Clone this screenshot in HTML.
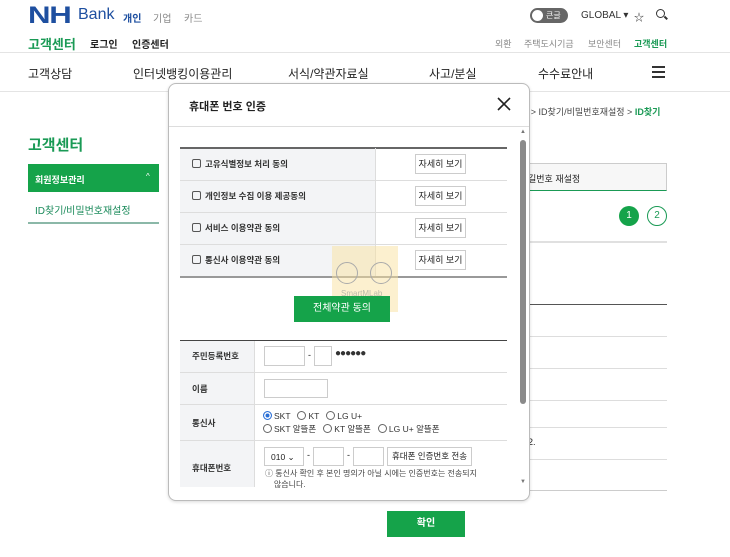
<!DOCTYPE html>
<html><head><meta charset="utf-8"><style>
*{margin:0;padding:0;box-sizing:border-box}
body{width:730px;height:557px;overflow:hidden;background:#fff;font-family:"Liberation Sans","Noto Sans CJK KR",sans-serif;color:#222;position:relative}
.a{position:absolute;white-space:nowrap}
.ln{position:absolute;height:1px}
.btn{position:absolute;border:1px solid #ccc;background:#fff;font-size:9px;text-align:center;line-height:18px;width:51px;height:20px;left:415px}
.cb{display:inline-block;width:9px;height:9px;border:1px solid #555;border-radius:2px;vertical-align:-1px;margin-right:4px}
.inp{position:absolute;border:1px solid #ccc;background:#fff}
.rd{display:inline-block;width:9px;height:9px;border:1px solid #666;border-radius:50%;vertical-align:-1px;margin-right:2px}
</style></head><body>
<!-- header -->
<div class="a" style="left:28px;top:2px;font-size:24px;font-weight:900;color:#1e4fa0;letter-spacing:-1px;transform:scaleX(1.3);transform-origin:left">NH</div>
<div class="a" style="left:78px;top:6px;font-size:16px;color:#1e4fa0">Bank</div>
<div class="a" style="left:123px;top:10px;font-size:10px;font-weight:bold;color:#1e4fa0">개인</div>
<div class="a" style="left:153px;top:10px;font-size:10px;color:#888">기업</div>
<div class="a" style="left:184px;top:10px;font-size:10px;color:#888">카드</div>
<div class="a" style="left:28px;top:34px;font-size:13px;font-weight:bold;color:#1a9a55">고객센터</div>
<div class="a" style="left:90px;top:36px;font-size:10px;font-weight:bold">로그인</div>
<div class="a" style="left:132px;top:36px;font-size:10px;font-weight:bold">인증센터</div>
<div class="a" style="left:530px;top:8px;width:38px;height:15px;border-radius:8px;background:#666"></div>
<div class="a" style="left:532px;top:10px;width:11px;height:11px;border-radius:50%;background:#fff"></div>
<div class="a" style="left:546px;top:10px;font-size:8px;color:#fff">큰글</div>
<div class="a" style="left:581px;top:10px;font-size:10px;color:#333">GLOBAL ▾</div>
<div class="a" style="left:634px;top:9px;font-size:10px;color:#333">☆</div>
<div class="a" style="left:656px;top:9px;width:9px;height:9px;border:1.5px solid #333;border-radius:50%"></div>
<div class="a" style="left:664px;top:17px;width:4px;height:1.5px;background:#333;transform:rotate(45deg)"></div>
<div class="a" style="left:495px;top:37px;font-size:9px;color:#888">외환</div>
<div class="a" style="left:524px;top:37px;font-size:9px;color:#888">주택도시기금</div>
<div class="a" style="left:588px;top:37px;font-size:9px;color:#888">보안센터</div>
<div class="a" style="left:634px;top:37px;font-size:9px;font-weight:bold;color:#1a9a55">고객센터</div>
<div class="ln" style="left:0;top:52px;width:730px;background:#e4e4e4"></div>
<div class="a" style="left:28px;top:65px;font-size:12px">고객상담</div>
<div class="a" style="left:133px;top:65px;font-size:12px">인터넷뱅킹이용관리</div>
<div class="a" style="left:288px;top:65px;font-size:12px">서식/약관자료실</div>
<div class="a" style="left:429px;top:65px;font-size:12px">사고/분실</div>
<div class="a" style="left:538px;top:65px;font-size:12px">수수료안내</div>
<div class="a" style="left:652px;top:66px;width:13px;height:1.5px;background:#333;box-shadow:0 5px 0 #333,0 10px 0 #333"></div>
<div class="ln" style="left:0;top:91px;width:730px;background:#e4e4e4"></div>
<!-- left sidebar -->
<div class="a" style="left:28px;top:134px;font-size:15px;font-weight:bold;color:#1a9a55">고객센터</div>
<div class="a" style="left:28px;top:164px;width:131px;height:28px;background:#15a34a"></div>
<div class="a" style="left:35px;top:173px;font-size:9px;color:#fff;font-weight:bold">회원정보관리</div>
<div class="a" style="left:146px;top:172px;font-size:8px;color:#fff">^</div>
<div class="a" style="left:35px;top:202px;font-size:10px;color:#1a8a5a">ID찾기/비밀번호재설정</div>
<div class="ln" style="left:28px;top:222px;width:131px;height:2px;background:#8bb8a8"></div>
<!-- right background -->
<div class="a" style="left:520px;top:105px;font-size:9px;color:#444">리 &gt; ID찾기/비밀번호재설정 &gt; <b style="color:#1a9a55">ID찾기</b></div>
<div class="a" style="left:512px;top:163px;width:155px;height:28px;border:1px solid #ccc;border-bottom:1px solid #1a9a55;background:#f7f7f7"></div>
<div class="a" style="left:528px;top:172px;font-size:9px">길번호 재설정</div>
<div class="a" style="left:619px;top:206px;width:20px;height:20px;border-radius:50%;background:#15a34a;color:#fff;font-size:10px;text-align:center;line-height:20px">1</div>
<div class="a" style="left:647px;top:206px;width:20px;height:20px;border-radius:50%;border:1.5px solid #1a9a55;color:#1a9a55;font-size:10px;text-align:center;line-height:17px">2</div>
<div class="ln" style="left:520px;top:241px;width:147px;height:2px;background:#e0e0e0"></div>
<div class="ln" style="left:520px;top:304px;width:147px;background:#555"></div>
<div class="ln" style="left:520px;top:336px;width:147px;background:#ddd"></div>
<div class="ln" style="left:520px;top:368px;width:147px;background:#ddd"></div>
<div class="ln" style="left:520px;top:400px;width:147px;background:#ddd"></div>
<div class="ln" style="left:520px;top:427px;width:147px;background:#ddd"></div>
<div class="a" style="left:528px;top:437px;font-size:9px">2.</div>
<div class="ln" style="left:520px;top:459px;width:147px;background:#ddd"></div>
<div class="ln" style="left:520px;top:490px;width:147px;background:#ccc"></div>
<div class="a" style="left:387px;top:511px;width:78px;height:26px;background:#15a34a;color:#fff;font-size:10px;font-weight:bold;text-align:center;line-height:26px">확인</div>
<!-- modal -->
<div class="a" style="left:168px;top:83px;width:362px;height:418px;background:#fff;border:1px solid #bbb;border-radius:8px;box-shadow:0 1px 3px rgba(0,0,0,.15)"></div>
<div class="a" style="left:189px;top:98px;font-size:11px;font-weight:bold">휴대폰 번호 인증</div>
<svg class="a" style="left:497px;top:97px" width="14" height="14"><path d="M1 1L13 13M13 1L1 13" stroke="#222" stroke-width="1.6"/></svg>
<div class="ln" style="left:169px;top:126px;width:360px;background:#ddd"></div>
<!-- scrollbar -->
<div class="a" style="left:520px;top:129px;font-size:6px;color:#777">▲</div>
<div class="a" style="left:520px;top:140px;width:6px;height:264px;border-radius:3px;background:#8a8a8a"></div>
<div class="a" style="left:520px;top:479px;font-size:6px;color:#777">▼</div>
<!-- agreements -->
<div class="a" style="left:180px;top:148px;width:195px;height:128px;background:#f3f4f6"></div>
<div class="ln" style="left:180px;top:147px;width:327px;height:2px;background:#666"></div>
<div class="ln" style="left:180px;top:180px;width:327px;background:#ddd"></div>
<div class="ln" style="left:180px;top:212px;width:327px;background:#ddd"></div>
<div class="ln" style="left:180px;top:244px;width:327px;background:#ddd"></div>
<div class="ln" style="left:180px;top:276px;width:327px;height:2px;background:#999"></div>
<div class="a" style="left:375px;top:148px;width:1px;height:128px;background:#ddd"></div>
<div class="a" style="left:192px;top:158px;font-size:8.5px;font-weight:bold;color:#333"><span class="cb"></span>고유식별정보 처리 동의</div>
<div class="a" style="left:192px;top:190px;font-size:8.5px;font-weight:bold;color:#333"><span class="cb"></span>개인정보 수집 이용 제공동의</div>
<div class="a" style="left:192px;top:222px;font-size:8.5px;font-weight:bold;color:#333"><span class="cb"></span>서비스 이용약관 동의</div>
<div class="a" style="left:192px;top:254px;font-size:8.5px;font-weight:bold;color:#333"><span class="cb"></span>통신사 이용약관 동의</div>
<div class="btn" style="top:154px">자세히 보기</div>
<div class="btn" style="top:186px">자세히 보기</div>
<div class="btn" style="top:218px">자세히 보기</div>
<div class="btn" style="top:250px">자세히 보기</div>
<div class="a" style="left:332px;top:246px;width:66px;height:66px;background:rgba(250,225,160,.5)"></div>
<div class="a" style="left:336px;top:262px;width:22px;height:22px;border:1px solid #aaa;border-radius:50%"></div>
<div class="a" style="left:370px;top:262px;width:22px;height:22px;border:1px solid #aaa;border-radius:50%"></div>
<div class="a" style="left:341px;top:289px;font-size:8px;color:#bba">SmartMLab</div>
<div class="a" style="left:294px;top:296px;width:96px;height:26px;background:#15a34a;color:#fff;font-size:10px;text-align:center;line-height:26px">전체약관 동의</div>
<!-- form -->
<div class="a" style="left:180px;top:341px;width:74px;height:146px;background:#f3f4f6"></div>
<div class="ln" style="left:180px;top:340px;width:327px;background:#444"></div>
<div class="ln" style="left:180px;top:372px;width:327px;background:#ddd"></div>
<div class="ln" style="left:180px;top:404px;width:327px;background:#ddd"></div>
<div class="ln" style="left:180px;top:440px;width:327px;background:#ddd"></div>
<div class="a" style="left:254px;top:341px;width:1px;height:146px;background:#ddd"></div>
<div class="a" style="left:192px;top:350px;font-size:8.5px;font-weight:bold;color:#333">주민등록번호</div>
<div class="a" style="left:192px;top:383px;font-size:8.5px;font-weight:bold;color:#333">이름</div>
<div class="a" style="left:192px;top:417px;font-size:8.5px;font-weight:bold;color:#333">통신사</div>
<div class="a" style="left:192px;top:462px;font-size:8.5px;font-weight:bold;color:#333">휴대폰번호</div>
<div class="inp" style="left:264px;top:346px;width:41px;height:20px"></div>
<div class="a" style="left:308px;top:350px;font-size:9px">-</div>
<div class="inp" style="left:314px;top:346px;width:18px;height:20px"></div>
<div class="a" style="left:335px;top:348px;font-size:10px;color:#333;letter-spacing:-1px">●●●●●●</div>
<div class="inp" style="left:264px;top:379px;width:64px;height:19px"></div>
<div class="a" style="left:263px;top:411px;font-size:8.5px;color:#333"><span class="rd" style="background:#2a6fd6;border-color:#2a6fd6;box-shadow:inset 0 0 0 1.5px #fff"></span>SKT &nbsp;&nbsp;<span class="rd"></span>KT &nbsp;&nbsp;<span class="rd"></span>LG U+</div>
<div class="a" style="left:263px;top:423px;font-size:8.5px;color:#333"><span class="rd"></span>SKT 알뜰폰 &nbsp;&nbsp;<span class="rd"></span>KT 알뜰폰 &nbsp;&nbsp;<span class="rd"></span>LG U+ 알뜰폰</div>
<div class="inp" style="left:264px;top:447px;width:40px;height:19px;font-size:8.5px;padding:4px 6px">010 ⌄</div>
<div class="a" style="left:307px;top:450px;font-size:9px">-</div>
<div class="inp" style="left:313px;top:447px;width:31px;height:19px"></div>
<div class="a" style="left:347px;top:450px;font-size:9px">-</div>
<div class="inp" style="left:353px;top:447px;width:31px;height:19px"></div>
<div class="inp" style="left:387px;top:447px;width:85px;height:19px;font-size:8.5px;text-align:center;line-height:17px">휴대폰 인증번호 전송</div>
<div class="a" style="left:265px;top:468px;font-size:8px;color:#444;line-height:11px">ⓘ 통신사 확인 후 본인 명의가 아닐 시에는 인증번호는 전송되지<br>&nbsp;&nbsp;&nbsp;&nbsp;않습니다.</div>
</body></html>
